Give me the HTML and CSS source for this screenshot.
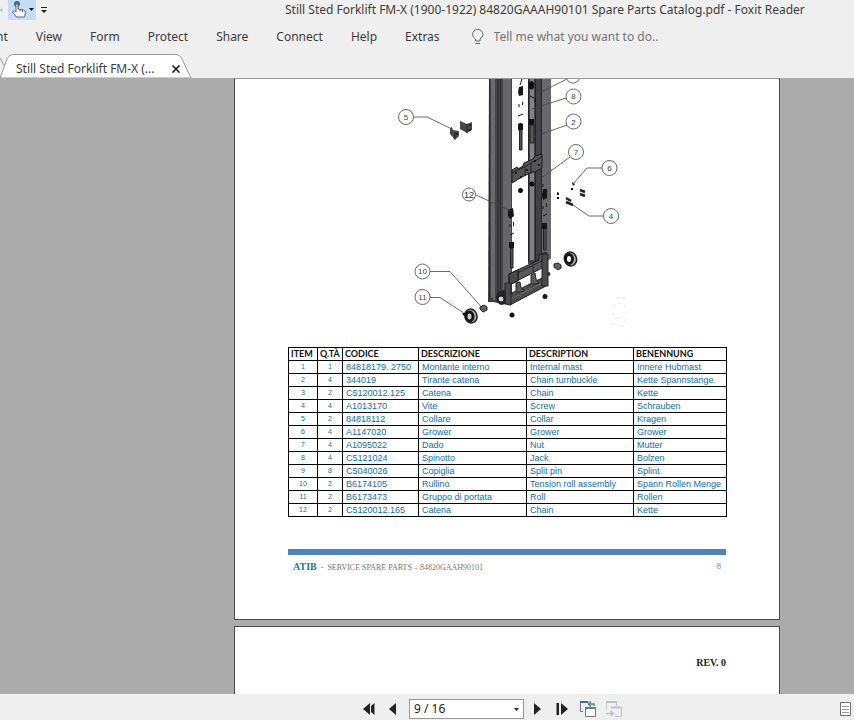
FILE: index.html
```html
<!DOCTYPE html>
<html lang="en">
<head>
<meta charset="utf-8">
<title>Still Sted Forklift FM-X (1900-1922) 84820GAAAH90101 Spare Parts Catalog.pdf - Foxit Reader</title>
<link rel="stylesheet" href="styles.css">
</head>
<body>
<header class="titlebar">
  <div class="quick">
    <svg class="edge-arrow" width="4" height="10" viewBox="0 0 4 10" aria-hidden="true"><path d="M0 4h1V2l2 3-2 3V6H0z" fill="#c3c8cf"/></svg>
    <button class="hand" aria-label="Hand tool">
      <svg width="28" height="20" viewBox="0 0 28 20">
        <circle cx="9" cy="4" r="3" fill="#3f689d"/>
        <path d="M8 12V5q0-1.500 1-1.500t1 1.500V9l5.500 1q2 .5 2 2.500l-1 4.500H8.500L4.500 12q.5-1.500 2-.7z" fill="#fff" stroke="#61656d"/>
        <path d="M12 9.500v2M14.500 10v2" stroke="#61656d"/>
        <path d="M21 8h5l-2.500 3z" fill="#111"/>
      </svg>
    </button>
    <button class="more" aria-label="Customize toolbar">
      <svg width="6" height="7" viewBox="0 0 6 7"><path d="M0 0h6v1H0zM0 3h6L3 6z" fill="#222"/></svg>
    </button>
  </div>
  <h1 class="title">Still Sted Forklift FM-X (1900-1922) 84820GAAAH90101 Spare Parts Catalog.pdf - Foxit Reader</h1>
</header>
<nav class="menu">
  <button>nt</button><button>View</button><button>Form</button><button>Protect</button><button>Share</button><button>Connect</button><button>Help</button><button>Extras</button>
  <label class="tell">
    <svg width="12" height="16" viewBox="0 0 12 16" fill="none" stroke="#666" aria-hidden="true"><path d="M3.500 12v-2Q.5 8 .5 5.500a5.200 5 0 0 1 10.500 0Q11 8 8 10v2zM3.500 14.500h4.500"/></svg>
    <input type="text" placeholder="Tell me what you want to do.." aria-label="Tell me what you want to do">
  </label>
</nav>
<div class="tabs">
  <svg class="tab-shape" width="194" height="24" viewBox="0 0 194 24" aria-hidden="true">
    <path d="M0 4l5 9" fill="none" stroke="#999"/>
    <path d="M0 24L7 5Q9 .5 14 .5H175Q180 .5 182 5L191 24z" fill="#fff" stroke="#999"/>
  </svg>
  <button class="tab">Still Sted Forklift FM-X (...</button>
  <button class="close" aria-label="Close tab"><svg width="8" height="8" viewBox="0 0 8 8"><path d="M.5 .5l7 7M7.500 .5l-7 7" stroke="#111" stroke-width="1.500"/></svg></button>
</div>
<main class="viewer">
  <article class="page first">
    <svg class="drawing" viewBox="235 79 544 268" role="img" aria-label="Exploded view of the internal mast">
      <!-- left rail -->
      <path d="M489 79h23v216l-14 8-10-2z" fill="#454547"/>
      <path d="M491 79h4v221h-4z" fill="#6a6a6d"/>
      <path d="M503 79h9v206l-9 5z" fill="#67676a"/>
      <path d="M489.500 79v222M498 79v222M500.500 79v210" stroke="#29292a"/>
      <path d="M511.500 79v210" stroke="#444"/>
      <!-- right rail -->
      <path d="M528 79h23v179l-6 4-17 2z" fill="#424244"/>
      <path d="M530 79h4v181h-4z" fill="#828286"/>
      <path d="M542 79h9v180l-9 3z" fill="#69696c"/>
      <path d="M528.500 79v182M535.500 79v182M541.500 79v182" stroke="#252526"/>
      <path d="M529 83q3-4 5 0v5q-3 3-5 0zM529 119h5v6h-5z" fill="#111"/>
      <path d="M530 125h4v18h-4z" fill="#555" stroke="#222"/>
      <path d="M530 96l4 2M535 98v4" stroke="#111"/>
      <!-- middle cross member -->
      <path d="M512 170l5-3 1 2 5-3 1-3 9-4 2-3 7-2v14l-7 4-3 0-10 5-10 6z" fill="#555557" stroke="#1b1b1c"/>
      <path d="M512 173l12-6 18-10M525 167v9M531 163v11" stroke="#222" fill="none"/>
      <g fill="#0a0a0a"><circle cx="516" cy="173" r="1"/><circle cx="521" cy="177" r="1"/><circle cx="527" cy="170" r="1"/><circle cx="535" cy="161" r="1"/><circle cx="539" cy="165" r="1"/><circle cx="520.500" cy="190.500" r="2.500"/><circle cx="532" cy="184" r="2.500"/></g>
      <!-- lower frame -->
      <path d="M510 294l36-18v10l-36 19z" fill="#4c4c4f" stroke="#232324"/>
      <path d="M511 299l35-18" stroke="#707073"/>
      <path d="M509 274l30-14v-5l7-3v14l-37 19z" fill="#59595c" stroke="#1d1d1e"/>
      <path d="M509 277l37-18M518 270v11M533 263v9" stroke="#2a2a2b"/>
      <path d="M509 274l9-4v11l-9 4z" fill="#49494b" stroke="#1d1d1e"/>
      <path d="M516 283v7q0 4 8 1-4-3-4-9zM531 275v7q0 4 8 1-4-3-4-10z" fill="#5a5a5c" stroke="#222"/>
      <path d="M505 283h6v22l-6-1zM542 254h6v32h-6z" fill="#4b4b4d" stroke="#202021"/>
      <path d="M496 296q2-5 6-6l4 2v12l-5 1q-5-2-5-9z" fill="#252526"/>
      <circle cx="501" cy="299" r="3" fill="#d7d7d7" stroke="#111"/>
      <path d="M488 298h5v4h-5z" fill="#3b3b3c"/><circle cx="548.500" cy="274" r="2" fill="#333"/>
      <!-- chain anchors and bolts -->
      <g fill="#151515">
        <path d="M519 87l4-1v9l-4 1-1-4zM508 210l5-2 1 8-4 3-2-3zM543 189h4v9l-4 2-1-5z"/>
        <path d="M518 124q3-2 5 0v6h-5zM509 242h5v6h-5zM542 223h5v6h-5z"/>
        <circle cx="512" cy="315" r="2.500"/><circle cx="545" cy="296.500" r="2.500"/>
      </g>
      <g fill="#505053" stroke="#222"><path d="M519.500 130h2.500v20h-2.500zM510.500 248h2.500v20h-2.500zM543.500 229h2.500v21h-2.500z"/></g>
      <path d="M519 104v3M522.500 102v3M518 116l5-2M510 224v3M513.500 222v4M510 235l4-2M543 206v3M546.500 203v4M543 216l4-2M520 85l2-6M543 184v3" stroke="#1b1b1b"/>
      <!-- collars, screws, washers -->
      <path d="M460 121l7 3 5-2v8l-5 3-7-4zM450 128l2-1 1 3 6 1v5l-4 4-5-6z" fill="#48484a"/>
      <path d="M467 124v9M455 132v7" stroke="#222"/>
      <g fill="#111"><circle cx="470" cy="125" r="1"/><circle cx="470" cy="130" r="1"/><circle cx="457" cy="134" r="1"/><path d="M557 192l2 1v2h-2zM557 197h2v2h-2zM572 182l3 2-2 2zM571 188h2v2h-2z"/></g>
      <path d="M580 190l5 2M580 194l5 2M566 198l5 3M566 202l7 3" stroke="#222" stroke-width="2.500"/>
      <!-- rollers and wheels -->
      <ellipse cx="570.500" cy="259" rx="6" ry="7" transform="rotate(-18 570.500 259)" fill="#aaa" stroke="#202020" stroke-width="1.500"/>
      <ellipse cx="569" cy="259" rx="3.500" ry="4.500" fill="#fff" stroke="#161616" stroke-width="3"/>
      <ellipse cx="471" cy="316" rx="6" ry="7" transform="rotate(-18 471 316)" fill="#aaa" stroke="#202020" stroke-width="1.500"/>
      <ellipse cx="469.500" cy="316.500" rx="3.500" ry="4.500" fill="#ccc" stroke="#161616" stroke-width="3"/>
      <path d="M554 264l4-1 3 2v3l-3 2-4-3zM480 307l4-2 3 2v3l-4 2-3-3z" fill="#626264" stroke="#222"/>
      <circle cx="464" cy="314" r="1.500" fill="#111"/>
      <!-- leader lines -->
      <path d="M414 117h13l23 11M476 195l35 16M430 271.500h20l31 35M430 297.500h10l23 15M567 79l-32 16M566 98l-34 11M567 125l-34 12M570 157l-37 27M602 168h-15l-14 16M603 216h-14l-16-11" fill="none" stroke="#444" stroke-width=".8"/>
      <g fill="#fff" stroke="#6a6a6a"><circle cx="406" cy="117" r="7.500"/><circle cx="469" cy="194.500" r="6.500"/><circle cx="422.500" cy="271.500" r="7.500"/><circle cx="422.500" cy="297" r="7.500"/><circle cx="573" cy="76" r="7"/><circle cx="573.500" cy="96.500" r="7.500"/><circle cx="573.500" cy="121.500" r="7.500"/><circle cx="576" cy="152" r="7.500"/><circle cx="609.500" cy="168" r="7.500"/><circle cx="611" cy="216" r="7.500"/></g>
      <g class="callouts"><text x="406" y="120">5</text><text class="wide" x="469" y="198">12</text><text x="422.500" y="274">10</text><text x="422.500" y="300">11</text><text x="573.500" y="99">8</text><text x="573.500" y="125">2</text><text x="576" y="155">7</text><text x="609.500" y="171">6</text><text x="611" y="219">4</text></g>
      <path d="M616 298h10M613 306h2M618 304l2-2M624 306h2M612 314h2M617 318h3M625 313h1M611 324h3M620 326h3M624 321h2" stroke="#e6e6e6"/>
    </svg>
    <table class="parts">
      <colgroup><col class="c-item"><col class="c-qty"><col class="c-code"><col class="c-it"><col class="c-en"><col class="c-de"></colgroup>
      <thead><tr><th>ITEM</th><th>Q.TÀ</th><th>CODICE</th><th>DESCRIZIONE</th><th>DESCRIPTION</th><th>BENENNUNG</th></tr></thead>
      <tbody>
        <tr><td>1</td><td>1</td><td>84818179. 2750</td><td>Montante interno</td><td>Internal mast</td><td>Innere Hubmast</td></tr>
        <tr><td>2</td><td>4</td><td>344019</td><td>Tirante catena</td><td>Chain turnbuckle</td><td>Kette Spannstange</td></tr>
        <tr><td>3</td><td>2</td><td>C5120012.125</td><td>Catena</td><td>Chain</td><td>Kette</td></tr>
        <tr><td>4</td><td>4</td><td>A1013170</td><td>Vite</td><td>Screw</td><td>Schrauben</td></tr>
        <tr><td>5</td><td>2</td><td>84818112</td><td>Collare</td><td>Collar</td><td>Kragen</td></tr>
        <tr><td>6</td><td>4</td><td>A1147020</td><td>Grower</td><td>Grower</td><td>Grower</td></tr>
        <tr><td>7</td><td>4</td><td>A1095022</td><td>Dado</td><td>Nut</td><td>Mutter</td></tr>
        <tr><td>8</td><td>4</td><td>C5121024</td><td>Spinotto</td><td>Jack</td><td>Bolzen</td></tr>
        <tr><td>9</td><td>8</td><td>C5040026</td><td>Copiglia</td><td>Split pin</td><td>Splint</td></tr>
        <tr><td>10</td><td>2</td><td>B6174105</td><td>Rullino</td><td>Tension roll assembly</td><td>Spann Rollen Menge</td></tr>
        <tr><td>11</td><td>2</td><td>B6173473</td><td>Gruppo di portata</td><td>Roll</td><td>Rollen</td></tr>
        <tr><td>12</td><td>2</td><td>C5120012.165</td><td>Catena</td><td>Chain</td><td>Kette</td></tr>
      </tbody>
    </table>
    <footer class="page-foot">
      <p><b class="brand">ATIB</b> <span class="dash">-</span> SERVICE SPARE PARTS – 84820GAAH90101</p>
      <span class="num">8</span>
    </footer>
  </article>
  <article class="page next"><p class="rev">REV. 0</p></article>
</main>
<footer class="status">
  <div class="pager">
    <button class="outer-first" aria-label="First page"><svg width="12" height="14" viewBox="0 0 12 14"><path d="M0 7l7-6v12zM8 4L11.500 1v12L8 10z" fill="#222"/></svg></button>
    <button aria-label="Previous page"><svg width="8" height="14" viewBox="0 0 8 14"><path d="M0 7l7-6v12z" fill="#222"/></svg></button>
    <span class="goto">
      <select aria-label="Page"><option>9 / 16</option></select>
      <svg class="caret" width="5" height="3" viewBox="0 0 5 3" aria-hidden="true"><path d="M0 0h5L2.500 3z" fill="#222"/></svg>
    </span>
    <button aria-label="Next page"><svg width="8" height="14" viewBox="0 0 8 14"><path d="M7 7L0 1v12z" fill="#222"/></svg></button>
    <button class="outer-last" aria-label="Last page"><svg width="12" height="14" viewBox="0 0 12 14"><path d="M12 7L5 1v12zM.5 1H3v12H.5z" fill="#222"/></svg></button>
    <button aria-label="Previous view"><svg width="16" height="16" viewBox="0 0 16 16" fill="none"><path d="M3 10.500H.5V1H9M10.500 6V5" stroke="#777"/><path d="M0 1h8" stroke="#3f6f9f" stroke-width="2"/><path d="M5.500 7h10v8.500h-10z" fill="#fff" stroke="#777"/><path d="M5 7h11" stroke="#777" stroke-width="2"/><path d="M14 5V3H9M11 .5L8.500 3 11 5.500" stroke="#4b9276" stroke-width="1.500"/></svg></button>
    <button aria-label="Next view"><svg width="16" height="16" viewBox="0 0 16 16" fill="none"><path d="M.5 9V1.500h10V5M5 6.500h10.500v9H9" stroke="#c0c5cc"/><path d="M0 1h11M5 6.500h11" stroke="#b9c3d0" stroke-width="2"/><path d="M0 12.500h7M4.500 10l3 2.500-3 2.500" stroke="#a9cbbb" stroke-width="1.500"/></svg></button>
  </div>
  <button aria-label="Single page view"><svg width="11" height="14" viewBox="0 0 11 14"><path d="M.5 .5h10v13H.5z" fill="#fff" stroke="#707070"/><path d="M2 4.500h7M2 7.500h7M2 10.500h7" stroke="#999"/></svg></button>
</footer>
</body>
</html>
```
FILE: styles.css
```css
* { box-sizing: border-box; }
body {
  margin: 0;
  height: 100vh;
  display: flex;
  flex-direction: column;
  overflow: hidden;
  background: #efefef;
  color: #3c3c3c;
  font: 12px/16px "Noto Sans", sans-serif;
}
button {
  margin: 0;
  padding: 0;
  border: 0;
  background: none;
  color: inherit;
  font: inherit;
  flex: none;
}
svg { display: block; }

.titlebar { display: flex; height: 20px; flex: none; }
.quick { display: flex; align-items: center; width: 285px; flex: none; }
.edge-arrow { margin-right: 4px; }
.hand { background: #c5dcf7; height: 20px; }
.more { margin-left: 5px; }
.title { margin: 0; padding-top: 2px; font: inherit; white-space: nowrap; }

.menu { display: flex; align-items: center; gap: 28px; height: 34px; flex: none; margin-left: -4px; }
.tell { display: flex; align-items: center; gap: 10px; margin-left: 4px; flex: 1; }
.tell svg { flex: none; }
.tell input { flex: 1; min-width: 0; padding: 0; border: 0; background: none; font: inherit; }
.tell input::placeholder { color: #747474; opacity: 1; }

.tabs { position: relative; display: flex; align-items: center; gap: 17px; height: 24px; flex: none; padding: 5px 0 0 16px; }
.tab-shape { position: absolute; left: 0; top: 0; }
.tab, .close { position: relative; }

.viewer {
  flex: 1;
  min-height: 0;
  overflow: hidden;
  display: grid;
  grid-template-columns: 234px minmax(0, 546px) 1fr;
  grid-auto-rows: max-content;
  row-gap: 6px;
  background: #ababab;
}
.page { grid-column: 2; border: 1px solid #4a4a4a; background: #fff; }
.page.first { padding-bottom: 46px; border-top-color: #999; }
.drawing { width: 100%; height: auto; }
.callouts { fill: #444; font: 8px "Liberation Sans", sans-serif; text-anchor: middle; }
.callouts .wide { font-size: 9px; fill: #333; }

.parts {
  width: 438px;
  margin-left: 53px;
  border-collapse: collapse;
  table-layout: fixed;
  font: 9px/12px "Liberation Sans", Arial, sans-serif;
  color: #0d70b5;
}
.c-item { width: 29px; }
.c-qty { width: 25px; }
.c-code { width: 76px; }
.c-it { width: 108px; }
.c-en { width: 107px; }
.c-de { width: 93px; }
.parts th, .parts td { height: 13px; padding: 0 0 0 3px; border: 1px solid #000; text-align: left; white-space: nowrap; }
.parts th { padding-left: 2px; font: bold 9px/12px Lato, sans-serif; color: #111; }
.parts td:nth-child(-n+2) { padding: 0; text-align: center; font-size: 7px; }

.page-foot {
  display: flex;
  justify-content: space-between;
  margin: 32px 53px 0;
  padding: 6px 5px 0;
  border-top: 6px solid #4f81bd;
  font: 8px/11px "Liberation Serif", serif;
  color: #777;
}
.page-foot p { margin: 0; }
.brand { font-size: 10px; color: #1f74b3; }
.dash { margin: 0 2px; }

.page.next { height: 120px; padding: 28px 53px; }
.rev { margin: 0; text-align: right; color: #222; font: bold 10px/16px "Liberation Serif", serif; }

.status { display: flex; align-items: center; justify-content: space-between; height: 26px; flex: none; padding: 4px 3px 0 363px; }
.pager { display: flex; align-items: center; gap: 10px; }
.outer-first { margin-right: 4px; }
.outer-last { margin: 0 2px 0 4px; }
.goto { position: relative; width: 115px; margin-left: 2px; }
.goto select { display: block; appearance: none; width: 100%; height: 20px; padding: 0 4px; border: 1px solid #999; border-radius: 0; background: #fff; color: #222; font: inherit; }
.caret { position: absolute; right: 5px; top: 9px; pointer-events: none; }
```
